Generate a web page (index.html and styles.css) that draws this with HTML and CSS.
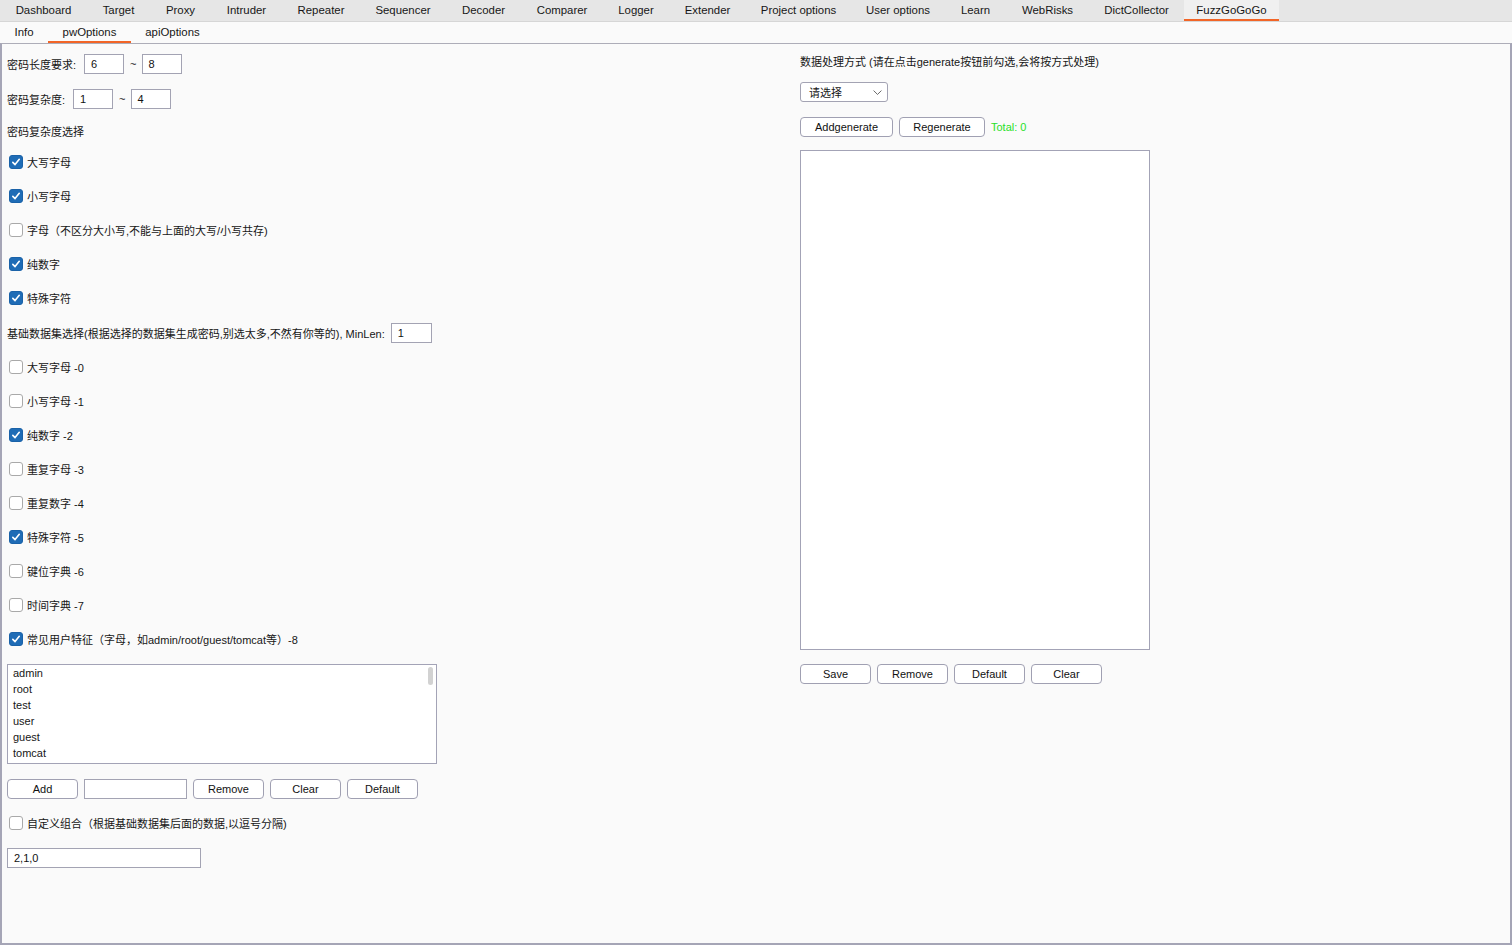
FILE: index.html
```html
<!DOCTYPE html>
<html lang="zh-CN">
<head>
<meta charset="utf-8">
<title>FuzzGoGoGo</title>
<link rel="stylesheet" href="styles.css">
</head>
<body>
<div class="app">
  <nav class="maintabs">
    <div class="tab">Dashboard</div>
    <div class="tab">Target</div>
    <div class="tab">Proxy</div>
    <div class="tab">Intruder</div>
    <div class="tab">Repeater</div>
    <div class="tab">Sequencer</div>
    <div class="tab">Decoder</div>
    <div class="tab">Comparer</div>
    <div class="tab">Logger</div>
    <div class="tab">Extender</div>
    <div class="tab">Project options</div>
    <div class="tab">User options</div>
    <div class="tab">Learn</div>
    <div class="tab">WebRisks</div>
    <div class="tab">DictCollector</div>
    <div class="tab active">FuzzGoGoGo</div>
  </nav>
  <nav class="subtabs">
    <div class="stab">Info</div>
    <div class="stab active">pwOptions</div>
    <div class="stab">apiOptions</div>
  </nav>
  <main class="panel">
    <section class="leftcol">
      <div class="row r-len">
        <span class="lbl">密码长度要求:</span>
        <span class="field w40">6</span>
        <span class="tilde">~</span>
        <span class="field w40">8</span>
      </div>
      <div class="row r-cx">
        <span class="lbl">密码复杂度:</span>
        <span class="field w40">1</span>
        <span class="tilde">~</span>
        <span class="field w40">4</span>
      </div>
      <div class="row r-title">密码复杂度选择</div>
      <div class="row cbrow first"><span class="cb on"><svg viewBox="0 0 14 14"><path d="M3.3 7.4 L5.9 10 L10.8 3.9" /></svg></span>大写字母</div>
      <div class="row cbrow"><span class="cb on"><svg viewBox="0 0 14 14"><path d="M3.3 7.4 L5.9 10 L10.8 3.9" /></svg></span>小写字母</div>
      <div class="row cbrow"><span class="cb"></span>字母（不区分大小写,不能与上面的大写/小写共存)</div>
      <div class="row cbrow"><span class="cb on"><svg viewBox="0 0 14 14"><path d="M3.3 7.4 L5.9 10 L10.8 3.9" /></svg></span>纯数字</div>
      <div class="row cbrow"><span class="cb on"><svg viewBox="0 0 14 14"><path d="M3.3 7.4 L5.9 10 L10.8 3.9" /></svg></span>特殊字符</div>
      <div class="row r-min">
        <span class="lbl">基础数据集选择(根据选择的数据集生成密码,别选太多,不然有你等的), MinLen:</span>
        <span class="field w41">1</span>
      </div>
      <div class="row cbrow"><span class="cb"></span>大写字母 -0</div>
      <div class="row cbrow"><span class="cb"></span>小写字母 -1</div>
      <div class="row cbrow"><span class="cb on"><svg viewBox="0 0 14 14"><path d="M3.3 7.4 L5.9 10 L10.8 3.9" /></svg></span>纯数字 -2</div>
      <div class="row cbrow"><span class="cb"></span>重复字母 -3</div>
      <div class="row cbrow"><span class="cb"></span>重复数字 -4</div>
      <div class="row cbrow"><span class="cb on"><svg viewBox="0 0 14 14"><path d="M3.3 7.4 L5.9 10 L10.8 3.9" /></svg></span>特殊字符 -5</div>
      <div class="row cbrow"><span class="cb"></span>键位字典 -6</div>
      <div class="row cbrow"><span class="cb"></span>时间字典 -7</div>
      <div class="row cbrow"><span class="cb on"><svg viewBox="0 0 14 14"><path d="M3.3 7.4 L5.9 10 L10.8 3.9" /></svg></span>常见用户特征（字母，如admin/root/guest/tomcat等）-8</div>
      <div class="listbox">
        <div class="item">admin</div>
        <div class="item">root</div>
        <div class="item">test</div>
        <div class="item">user</div>
        <div class="item">guest</div>
        <div class="item">tomcat</div>
        <span class="thumb"></span>
      </div>
      <div class="row btnrow">
        <span class="btn w71">Add</span>
        <span class="field w103"></span>
        <span class="btn w71">Remove</span>
        <span class="btn w71">Clear</span>
        <span class="btn w71">Default</span>
      </div>
      <div class="row cbrow"><span class="cb"></span>自定义组合（根据基础数据集后面的数据,以逗号分隔)</div>
      <div class="row r-last">
        <span class="field w194">2,1,0</span>
      </div>
    </section>
    <section class="rightcol">
      <div class="row r-rtitle">数据处理方式 (请在点击generate按钮前勾选,会将按方式处理)</div>
      <div class="row r-select">
        <span class="select">请选择<svg class="chev" viewBox="0 0 12 8"><path d="M1.5 1.8 L6 6.2 L10.5 1.8" /></svg></span>
      </div>
      <div class="row r-gen">
        <span class="btn w93">Addgenerate</span>
        <span class="btn w86">Regenerate</span>
        <span class="total">Total: 0</span>
      </div>
      <div class="textarea"></div>
      <div class="row r-save">
        <span class="btn w71">Save</span>
        <span class="btn w71">Remove</span>
        <span class="btn w71">Default</span>
        <span class="btn w71">Clear</span>
      </div>
    </section>
  </main>
</div>
</body>
</html>
```

FILE: styles.css
```css
* { box-sizing: border-box; }
html, body { margin: 0; padding: 0; }
body {
  width: 1512px;
  height: 945px;
  background: #fafafa;
  font-family: "Liberation Sans", Arial, "Noto Sans CJK SC", sans-serif;
  font-size: 11px;
  color: #161616;
  overflow: hidden;
}
.app { display: flex; flex-direction: column; height: 945px; }

.maintabs {
  display: grid;
  grid-template-columns: 87px 63px 61px 71px 78px 86px 75px 82px 66px 77px 105px 94px 61px 83px 95px 95px;
  height: 22px;
  background: #e6e6e6;
  border-bottom: 1px solid #d6d6d6;
}
.tab {
  display: flex; align-items: center; justify-content: center;
  height: 21px;
  padding-bottom: 1px;
  font-size: 11.4px;
  color: #161616;
  white-space: nowrap;
}
.tab.active {
  background: #f0f0f0;
  border-bottom: 2px solid #f26527;
  padding-bottom: 0;
}

.subtabs {
  display: grid;
  grid-template-columns: 48px 83px 83px;
  height: 21px;
  background: #fafafa;
}
.stab {
  display: flex; align-items: center; justify-content: center;
  height: 21px;
  padding-bottom: 2px;
  font-size: 11.4px;
  color: #161616;
}
.stab.active { border-bottom: 2px solid #f26527; padding-bottom: 0; }

.panel {
  flex: 1;
  display: grid;
  grid-template-columns: 798px 1fr;
  border: 2px solid #a5a5b6;
  border-top: 1px solid #adadb8;
  background: #fafafa;
}

.row { display: flex; align-items: center; height: 20px; white-space: nowrap; }

.leftcol { display: flex; flex-direction: column; padding: 10px 0 0 5px; }
.r-cx { margin-top: 15px; }
.r-title { margin-top: 12px; }
.cbrow { margin-top: 14px; }
.cbrow.first { margin-top: 11px; }
.r-min { margin-top: 15px; }
.listbox { margin-top: 15px; }
.btnrow { margin-top: 15px; gap: 6px; }
.r-last { margin-top: 15px; }

.lbl { margin-right: 8px; }
.r-min .lbl { margin-right: 6px; }
.tilde { margin: 0 5px 0 6px; }

.field {
  display: flex; align-items: center;
  height: 20px;
  background: #fff;
  border: 1px solid #a3a3b3;
  padding-left: 6px;
  color: #111;
}
.w40 { width: 40px; }
.w41 { width: 41px; }
.w103 { width: 103px; }
.w194 { width: 194px; }

.cb {
  display: inline-flex; align-items: center; justify-content: center;
  width: 14px; height: 14px;
  margin-left: 2px; margin-right: 4px;
  border: 1px solid #a9a9a9;
  border-radius: 3px;
  background: #fff;
}
.cb.on { background: #1f6cb6; border-color: #1a62a8; }
.cb svg { width: 14px; height: 14px; }
.cb svg path { fill: none; stroke: #fff; stroke-width: 1.9; stroke-linecap: round; stroke-linejoin: round; }

.listbox {
  position: relative;
  width: 430px; height: 100px;
  background: #fff;
  border: 1px solid #a3a3b6;
  padding: 0 0 0 5px;
}
.item { height: 16px; line-height: 16px; }
.thumb {
  position: absolute;
  right: 3px; top: 2px;
  width: 5px; height: 18px;
  border-radius: 3px;
  background: #d2d2d2;
}

.btn {
  display: flex; align-items: center; justify-content: center;
  height: 20px;
  background: #fff;
  border: 1px solid #a0a0b2;
  border-radius: 4px;
  color: #111;
}
.w71 { width: 71px; }
.w93 { width: 93px; }
.w86 { width: 86px; }

.rightcol { display: flex; flex-direction: column; padding: 7px 0 0 0; }
.r-select { margin-top: 11px; }
.select {
  position: relative;
  display: flex; align-items: center;
  width: 88px; height: 20px;
  padding-left: 8px;
  background: #fff;
  border: 1px solid #a3a3b3;
  border-radius: 3px;
}
.chev { position: absolute; right: 4px; top: 6px; width: 11px; height: 7px; }
.chev path { fill: none; stroke: #555; stroke-width: 1; }
.r-gen { margin-top: 15px; gap: 6px; }
.total { color: #28e028; }
.textarea {
  margin-top: 13px;
  width: 350px; height: 500px;
  background: #fff;
  border: 1px solid #a3a3b6;
}
.r-save { margin-top: 14px; gap: 6px; }
```
